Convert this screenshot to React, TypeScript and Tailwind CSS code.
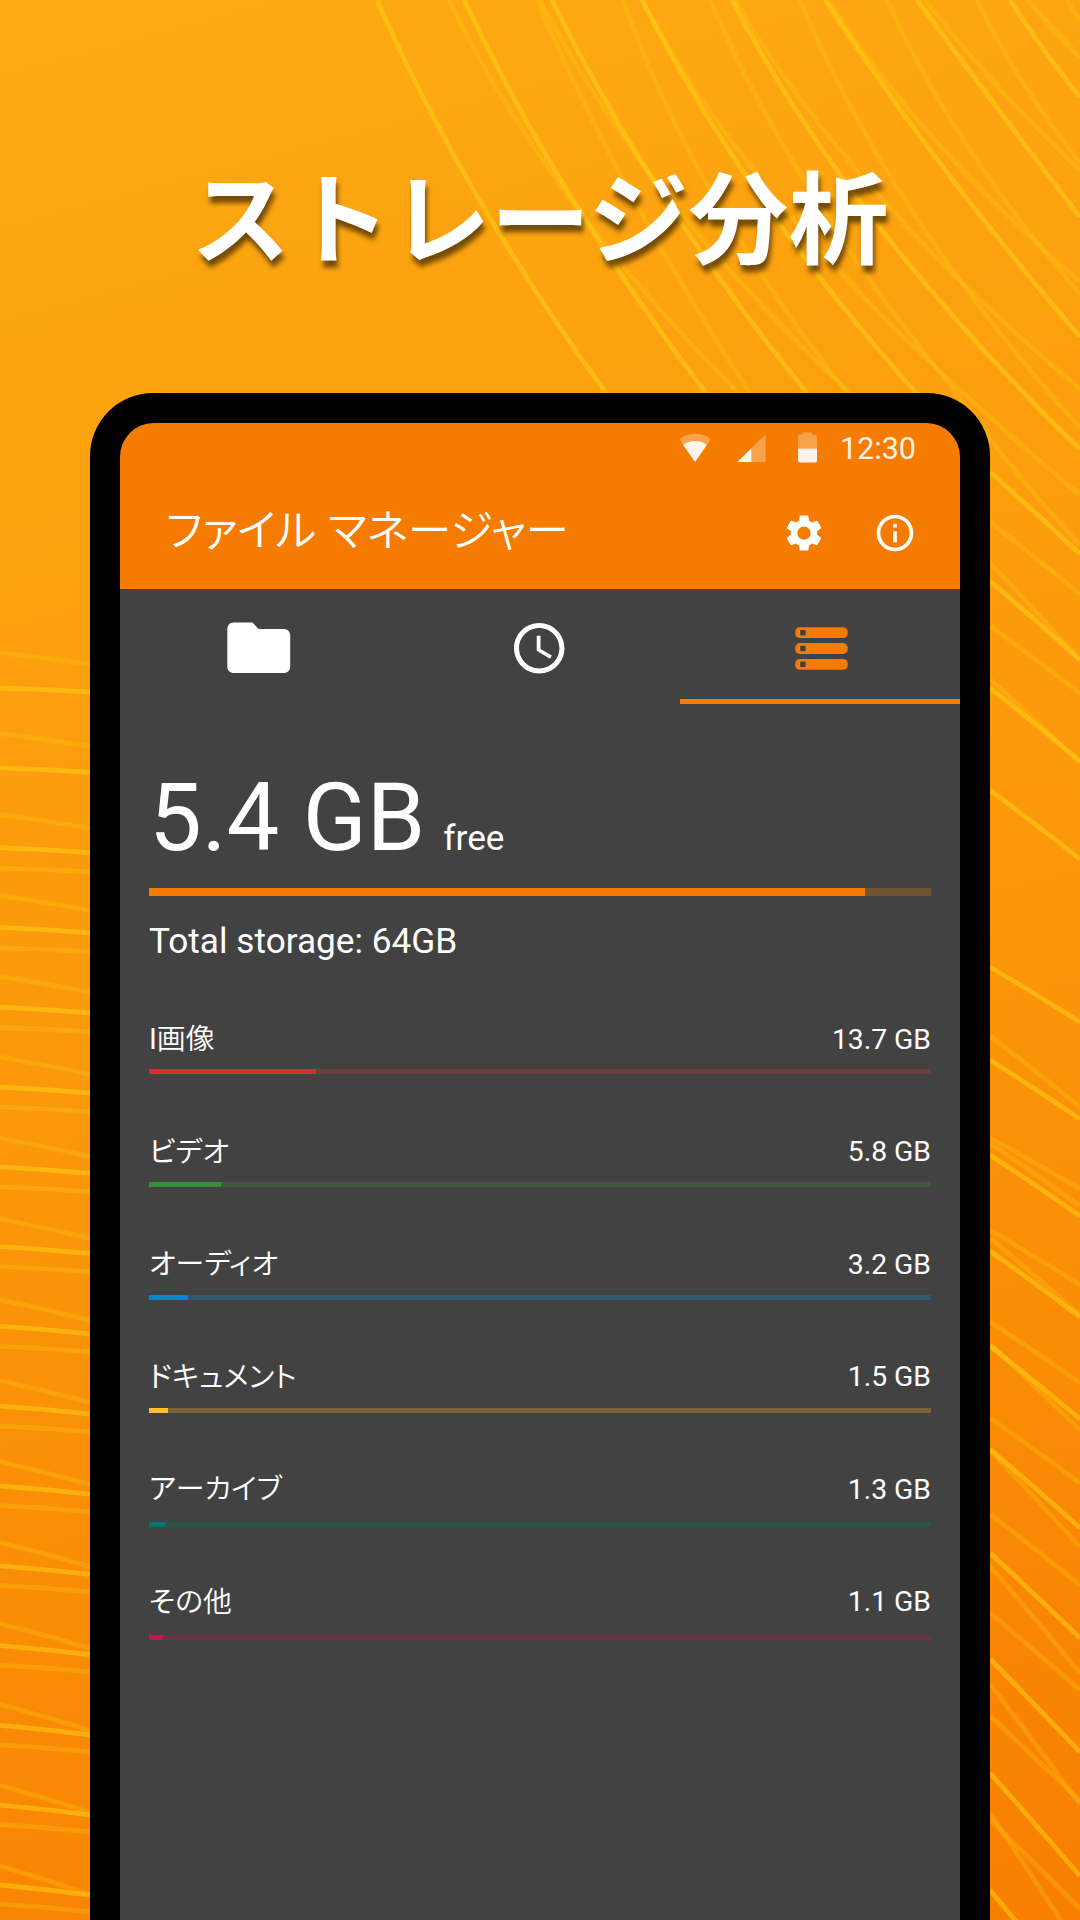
import React from "react";
import { MdSettings, MdInfoOutline, MdFolder, MdAccessTime } from "react-icons/md";

type Pt = [number, number];

/** Parabola x = f(y) through three points, as a quadratic Bézier. */
function arc([[x0, y0], [x1, y1], [x2, y2]]: Pt[]): string {
  const s1 = (x1 - x0) / (y1 - y0);
  const s2 = (x2 - x0) / (y2 - y0);
  const b = (s2 - s1) / (y2 - y1);
  const slope = s1 - b * (y1 - y0);
  const h = (y2 - y0) / 2;
  return `M${x0} ${y0}Q${x0 + slope * h} ${y0 + h} ${x2} ${y2}`;
}

const topBright: Pt[][] = [
  [[377, 0], [451, 150], [606, 393]],
  [[464, 0], [543, 150], [706, 393]],
  [[552, 0], [634.5, 150], [807, 393]],
  [[642, 0], [728.7, 150], [916, 393]],
  [[732, 0], [822.8, 150], [1024, 393]],
  [[1024, 393], [1051, 421], [1080, 449]],
  [[825, 0], [930, 150], [1080, 337]],
  [[917, 0], [986, 93], [1080, 217]],
  [[1010, 0], [1044, 50], [1080, 97]],
];

const topDim: Pt[][] = [
  [[449, 0], [529, 140], [738, 393]],
  [[540, 0], [645, 167], [850, 393]],
  [[642, 0], [751, 167], [960, 390]],
  [[960, 390], [1018, 442], [1080, 495]],
  [[735, 0], [859, 173], [1080, 389]],
  [[828, 0], [953, 160], [1080, 282]],
  [[925, 0], [1001, 90], [1080, 170]],
  [[1027, 0], [1053, 29], [1080, 57]],
  [[537, 0], [645, 220], [750, 393]],
  [[623, 0], [710, 190], [847, 393]],
  [[710, 0], [802, 177], [958, 395]],
  [[958, 395], [990, 439], [1080, 545]],
  [[800, 0], [897, 187], [1080, 428]],
  [[887, 0], [1010, 207], [1080, 294]],
  [[977, 0], [1020, 78], [1080, 163]],
  [[1067, 0], [1073, 10], [1080, 20]],
];

// Height at x=990 and at x=1080 of the strands right of the phone.
const rightBright: Pt[] = [
  [472, 554], [581, 660], [688, 761], [790, 859],
  [967, 1022], [1060, 1119], [1155, 1216], [1251, 1317], [1346, 1419],
  [1449, 1528], [1553, 1638], [1659, 1752], [1773, 1876], [1890, 2000],
];
const rightDim: Pt[] = [
  [522, 594], [626, 693], [563, 660], [679, 763],
  [1036, 1107], [1138, 1189], [1230, 1285], [1322, 1383], [1418, 1483],
  [1514, 1585], [1613, 1690], [1716, 1801], [1820, 1909],
  [1143, 1206], [1238, 1315], [1344, 1430], [1450, 1547], [1566, 1673],
  [1684, 1804], [1813, 1950],
];

// Height at x=0 and at x=90 of the strands left of the phone.
const leftBright: Pt[] = Array.from({ length: 16 }, (_, i) => [688 + i * 79.8, 692.2 + i * 80.2] as Pt);
const leftSteep: Pt[] = Array.from({ length: 16 }, (_, i) => [652.6 + i * 80.9, 664.4 + i * 82] as Pt);
const leftDim: Pt[] = Array.from({ length: 14 }, (_, i) => [868.1 + i * 79.7, 871.9 + i * 80] as Pt);

function Strands({ items, x0, x1 }: { items: Pt[]; x0: number; x1: number }) {
  return (
    <>
      {items.map(([a, b], i) => (
        <path key={i} d={`M${x0} ${a}Q${(x0 + x1) / 2} ${(a + b) / 2 - 1} ${x1} ${b}`} />
      ))}
    </>
  );
}

function Backdrop() {
  return (
    <svg className="absolute inset-0" width="1080" height="1920" viewBox="0 0 1080 1920" fill="none" strokeWidth="4.8">
      <g stroke="#ffd414" strokeOpacity="0.5">
        {topBright.map((p, i) => <path key={i} d={arc(p)} />)}
        <Strands items={rightBright} x0={990} x1={1080} />
        <Strands items={leftBright} x0={0} x1={90} />
      </g>
      <g stroke="#ffd414" strokeOpacity="0.25">
        {topDim.map((p, i) => <path key={i} d={arc(p)} />)}
        <Strands items={rightDim} x0={990} x1={1080} />
        <Strands items={leftSteep} x0={0} x1={90} />
        <Strands items={leftDim} x0={0} x1={90} />
      </g>
    </svg>
  );
}

function StatusBar() {
  return (
    <div className="flex h-[52px] items-center justify-end pr-[44px] text-white/90">
      <svg className="mr-[26px] -mt-px" width="32" height="30" viewBox="0 0 32 30" fill="currentColor">
        <path fillOpacity="0.33" d="M16 29 0.3 6.3Q7 0.8 16 0.8T31.7 6.3Z" />
        <path d="M16 29 4.2 11.9Q9 8.1 16 8.1T27.8 11.9Z" />
      </svg>
      <svg className="mr-[32px] -mt-px" width="29" height="30" viewBox="0 0 29 30" fill="currentColor">
        <path fillOpacity="0.33" d="M0.3 29 28.6 1.4V29Z" />
        <path d="M0.3 29 14.3 15.4V29Z" />
      </svg>
      <svg className="mr-[23px] -mt-[3px]" width="19" height="31" viewBox="0 0 19 31" fill="currentColor">
        <path fillOpacity="0.33" d="M5 0.5h9v2h3a2 2 0 0 1 2 2V16.5H0V4.5a2 2 0 0 1 2-2h3Z" />
        <path d="M0 16.5h19v12a2 2 0 0 1-2 2H2a2 2 0 0 1-2-2Z" />
      </svg>
      <span className="mt-px text-[30.5px] leading-none">12:30</span>
    </div>
  );
}

function StorageIcon() {
  return (
    <svg width="53" height="43" viewBox="0 0 53 43" fill="#f57c00">
      {[0, 15.8, 31.6].map((y) => (
        <g key={y}>
          <rect x="0.3" y={y + 0.3} width="52.4" height="10.8" rx="4.5" />
          <rect x="5.2" y={y + 3} width="5.4" height="5.4" fill="#424242" />
        </g>
      ))}
    </svg>
  );
}

const rows = [
  { label: "I画像", size: "13.7 GB", used: 167, fill: "bg-[#d32f2f]", track: "bg-[#6a3f3d]" },
  { label: "ビデオ", size: "5.8 GB", used: 71.5, fill: "bg-[#388e3c]", track: "bg-[#42593f]" },
  { label: "オーディオ", size: "3.2 GB", used: 39, fill: "bg-[#0288d1]", track: "bg-[#30586e]" },
  { label: "ドキュメント", size: "1.5 GB", used: 18.5, fill: "bg-[#fbc02d]", track: "bg-[#7a6437]" },
  { label: "アーカイブ", size: "1.3 GB", used: 15.5, fill: "bg-[#00796b]", track: "bg-[#2f5249]" },
  { label: "その他", size: "1.1 GB", used: 13.5, fill: "bg-[#c2185b]", track: "bg-[#683446]" },
];

export default function App() {
  return (
    <div className="relative h-[1920px] w-[1080px] overflow-hidden bg-[linear-gradient(165deg,#fdaa12_0%,#fb980b_50%,#f87f00_100%)] font-[Roboto,'Noto_Sans_CJK_JP',sans-serif] text-white">
      <Backdrop />
      <div className="relative flex h-full flex-col items-center">
        <h1 className="flex h-[393px] shrink-0 items-start pt-[140px] pr-[1px] font-['Noto_Sans_CJK_JP',sans-serif] text-[100px] leading-[146px] font-bold whitespace-nowrap [text-shadow:2px_7px_5px_rgba(0,0,0,0.55)]">
          ストレージ分析
        </h1>
        <div className="h-[1600px] w-[900px] shrink-0 rounded-t-[63px] bg-black px-[30px] pt-[29.5px]">
          <div className="h-full overflow-hidden rounded-t-[34px] bg-[#424242]">
            <header className="h-[166.5px] bg-[#f57c00]">
              <StatusBar />
              <div className="flex h-[116px] items-center pr-[43px] pl-[46px]">
                <h2 className="mt-[-10px] flex-1 font-['Noto_Sans_CJK_JP',sans-serif] text-[43.4px] leading-none font-[350] [font-feature-settings:'palt'] [word-spacing:2px]">ファイル マネージャー</h2>
                <MdSettings size={44} className="mr-[47px]" />
                <MdInfoOutline size={44} />
              </div>
            </header>
            <nav className="grid h-[115px] grid-cols-3">
              <div className="flex items-center justify-center pt-[3px] pr-[3px]"><MdFolder size={75.5} /></div>
              <div className="flex items-center justify-center pt-1 pr-px"><MdAccessTime size={60.5} /></div>
              <div className="flex items-center justify-center border-b-[5px] border-[#f57c00] pt-[9px] pl-[2px]"><StorageIcon /></div>
            </nav>
            <main className="px-[29px]">
              <div className="flex h-[184px] items-baseline gap-[18px] pt-[59px] leading-[110px]">
                <span className="text-[94px]">5.4 GB</span>
                <span className="text-[35.2px]">free</span>
              </div>
              <div className="h-[7.5px] bg-[#6f5232]"><div className="h-full w-[715.5px] bg-[#f57c00]" /></div>
              <p className="mt-[25px] text-[35.2px] leading-[40px]">Total storage: 64GB</p>
              <ul className="mt-[56px]">
                {rows.map((r, i) => (
                  <li key={r.label} className="h-[112.5px]">
                    <div className="flex h-[52px] items-center justify-between pb-[5px] leading-none">
                      <span className="-mt-px text-[28.9px] font-[350] [font-feature-settings:'palt'] first-letter:font-normal">{r.label}</span>
                      <span className="text-[28.3px]">{r.size}</span>
                    </div>
                    <div className={`h-[5px] ${r.track}`} style={{ marginTop: i * 0.8 }}>
                      <div className={`h-full ${r.fill}`} style={{ width: r.used }} />
                    </div>
                  </li>
                ))}
              </ul>
            </main>
          </div>
        </div>
      </div>
    </div>
  );
}
